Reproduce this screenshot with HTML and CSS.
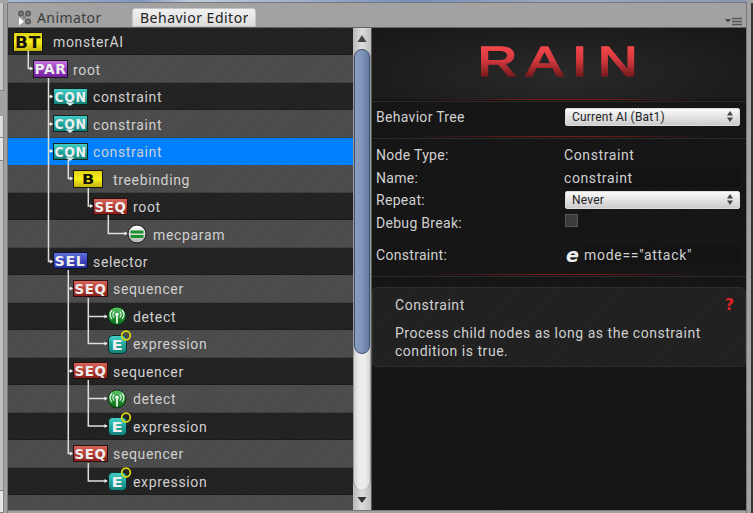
FILE: index.html
```html
<!DOCTYPE html>
<html lang="en">
<head>
<meta charset="utf-8">
<title>Behavior Editor</title>
<link rel="stylesheet" href="styles.css">
</head>
<body>
<svg class="defs" width="0" height="0" aria-hidden="true">
  <defs>
    <linearGradient id="gYellow" x2="0" y2="1"><stop offset="0" stop-color="#ddd018"/><stop offset=".5" stop-color="#f8ee18"/><stop offset="1" stop-color="#c0b30c"/></linearGradient>
    <linearGradient id="gPurple" x2="0" y2="1"><stop offset="0" stop-color="#c778dd"/><stop offset=".45" stop-color="#9e45c4"/><stop offset="1" stop-color="#6f1c9c"/></linearGradient>
    <linearGradient id="gTeal" x2="0" y2="1"><stop offset="0" stop-color="#45cfc5"/><stop offset=".5" stop-color="#20a79e"/><stop offset="1" stop-color="#128078"/></linearGradient>
    <linearGradient id="gRed" x2="0" y2="1"><stop offset="0" stop-color="#d9695d"/><stop offset=".5" stop-color="#b53c32"/><stop offset="1" stop-color="#85201a"/></linearGradient>
    <linearGradient id="gBlue" x2="0" y2="1"><stop offset="0" stop-color="#6573df"/><stop offset=".5" stop-color="#3d48bd"/><stop offset="1" stop-color="#232c99"/></linearGradient>
    <linearGradient id="gGreen" x2="0" y2="1"><stop offset="0" stop-color="#62c76c"/><stop offset=".5" stop-color="#259434"/><stop offset="1" stop-color="#0b6719"/></linearGradient>
    <linearGradient id="gWhite" x2="0" y2="1"><stop offset="0" stop-color="#fff"/><stop offset="1" stop-color="#b5b5b5"/></linearGradient>
    <linearGradient id="gLogo" x2="0" y2="1"><stop offset=".18" stop-color="#f5484c"/><stop offset=".5" stop-color="#cf373b"/><stop offset=".82" stop-color="#75191c"/></linearGradient>
    <symbol id="bt" viewBox="0 0 30 20"><rect x=".5" y=".5" width="29" height="19" fill="url(#gYellow)" stroke="#17160a"/><text class="code dark" x="2" y="15.5" font-size="15" textLength="26" lengthAdjust="spacingAndGlyphs">BT</text></symbol>
    <symbol id="par" viewBox="0 0 35 18"><rect x=".5" y=".5" width="34" height="17" fill="url(#gPurple)" stroke="#201026"/><text class="code" x="1.5" y="14" font-size="14" textLength="32" lengthAdjust="spacingAndGlyphs">PAR</text></symbol>
    <symbol id="con" viewBox="0 0 35 18"><rect x=".5" y=".5" width="34" height="16" fill="url(#gTeal)" stroke="#102522"/><path d="M12.5 14.5h9L17 18z" fill="#d8eeec"/><text class="code" x="1.5" y="13.5" font-size="14" textLength="32" lengthAdjust="spacingAndGlyphs">CON</text></symbol>
    <symbol id="b" viewBox="0 0 30 18"><rect x=".5" y=".5" width="29" height="17" fill="url(#gYellow)" stroke="#17160a"/><text class="code dark" x="9" y="14" font-size="14" textLength="13" lengthAdjust="spacingAndGlyphs">B</text></symbol>
    <symbol id="seq" viewBox="0 0 35 18"><rect x=".5" y=".5" width="34" height="16" fill="url(#gRed)" stroke="#2a0f0c"/><text class="code" x="1.5" y="13.5" font-size="14" textLength="32" lengthAdjust="spacingAndGlyphs">SEQ</text></symbol>
    <symbol id="sel" viewBox="0 0 35 18"><rect x=".5" y=".5" width="34" height="16" fill="url(#gBlue)" stroke="#101230"/><text class="code" x="1.5" y="13.5" font-size="14" textLength="31" lengthAdjust="spacingAndGlyphs">SEL</text></symbol>
    <symbol id="mec" viewBox="0 0 20 20"><circle cx="10" cy="10" r="9" fill="url(#gWhite)" stroke="#1a1a1a"/><path d="M3.5 6.5h13v3h-13zM3.5 11h13v3h-13z" fill="#199230"/></symbol>
    <symbol id="det" viewBox="0 0 20 20"><circle cx="10" cy="10" r="9" fill="url(#gGreen)" stroke="#0c3312"/><circle cx="10" cy="8.5" r="1.8" fill="#fff"/><path d="M10 9v8.5" stroke="#d8f0da" stroke-width="2"/><path d="M7.3 5.5a4 4 0 0 0 0 6M12.7 5.5a4 4 0 0 1 0 6M5 4a6.4 6.4 0 0 0 0 9M15 4a6.4 6.4 0 0 1 0 9" fill="none" stroke="#e5f6e6" stroke-width="1.1"/></symbol>
    <symbol id="exp" viewBox="0 0 26 26"><rect x="1.500" y="6.500" width="18" height="18" rx="4" fill="url(#gTeal)" stroke="#0d2b29"/><text class="code" x="4.500" y="20.500" font-size="14" textLength="12" lengthAdjust="spacingAndGlyphs">E</text><circle cx="19" cy="6.500" r="4.300" fill="none" stroke="#dcd713" stroke-width="1.700"/></symbol>
  </defs>
</svg>

<div class="editor">
  <div class="scene"></div>
  <div class="dock"><i class="slab tall"></i><i class="slab small"></i><i class="slab tiny"></i><i class="slab rest"></i><i class="slab last"></i></div>
  <div class="window">
    <div class="tabs">
      <div class="tab">
        <svg class="tab-icon" width="16" height="16" viewBox="0 0 16 16"><g fill="#777" stroke="#555" stroke-width="1.200"><circle cx="4" cy="3.500" r="2.400"/><circle cx="11" cy="3.500" r="2.400"/><circle cx="11" cy="11.500" r="2.400"/></g><path d="M5 5l5 5M9.500 5L6 9" stroke="#666"/><path d="M2 7.500l5 4-5 4z" fill="#fff"/></svg>
        <span class="animator">Animator</span>
      </div>
      <div class="tab active"><span>Behavior Editor</span></div>
      <svg class="menu" width="18" height="9" viewBox="0 0 18 9"><path d="M0 2h6L3 5.500z" fill="#444"/><path d="M7 1.500h10M7 4.500h10M7 7.500h10" stroke="#555" stroke-width="1.300"/></svg>
    </div>
    <div class="body">
      <div class="tree">
        <div class="row d0"><svg class="i-bt"><use href="#bt"/></svg><span>monsterAI</span></div>
        <div class="row d1"><svg class="i-code"><use href="#par"/></svg><span>root</span></div>
        <div class="row d2"><svg class="i-code"><use href="#con"/></svg><span>constraint</span></div>
        <div class="row d2"><svg class="i-code"><use href="#con"/></svg><span>constraint</span></div>
        <div class="row d2 selected"><svg class="i-code"><use href="#con"/></svg><span>constraint</span></div>
        <div class="row d3"><svg class="i-b"><use href="#b"/></svg><span>treebinding</span></div>
        <div class="row d4"><svg class="i-code"><use href="#seq"/></svg><span>root</span></div>
        <div class="row d5"><svg class="i-round mec"><use href="#mec"/></svg><span>mecparam</span></div>
        <div class="row d2"><svg class="i-code"><use href="#sel"/></svg><span>selector</span></div>
        <div class="row d3"><svg class="i-code"><use href="#seq"/></svg><span>sequencer</span></div>
        <div class="row d4"><svg class="i-round"><use href="#det"/></svg><span>detect</span></div>
        <div class="row d4"><svg class="i-exp"><use href="#exp"/></svg><span>expression</span></div>
        <div class="row d3"><svg class="i-code"><use href="#seq"/></svg><span>sequencer</span></div>
        <div class="row d4"><svg class="i-round"><use href="#det"/></svg><span>detect</span></div>
        <div class="row d4"><svg class="i-exp"><use href="#exp"/></svg><span>expression</span></div>
        <div class="row d3"><svg class="i-code"><use href="#seq"/></svg><span>sequencer</span></div>
        <div class="row d4"><svg class="i-exp"><use href="#exp"/></svg><span>expression</span></div>
        <div class="row"></div>
        <svg class="links" width="345" height="483" viewBox="8 28 345 483">
          <g fill="none" stroke="#deded9" stroke-width="1.500">
            <path d="M28.300 51v17.500h4M48.500 78v183.500h4M48.500 96.500h4M48.500 124h4M48.500 151h4M68.300 160v18.500h4M88.300 188v18h4M108.300 215v18.500H127M68.300 270v183.500h4M68.300 288.500h4M68.300 371h4M88.300 298v45.500H107M88.300 316.500H107M88.300 380v46H107M88.300 398.500H107M88.300 463v18H107"/>
          </g>
          <path fill="#eee" d="M30 66.500l3 2-3 2zM50 94.500l3 2-3 2zM50 122l3 2-3 2zM50 149l3 2-3 2zM50 259.500l3 2-3 2zM70 176.500l3 2-3 2zM90 204l3 2-3 2zM124.500 231.500l3 2-3 2zM70 286.500l3 2-3 2zM70 369l3 2-3 2zM70 451.500l3 2-3 2zM104.500 314.500l3 2-3 2zM104.500 341.500l3 2-3 2zM104.500 396.500l3 2-3 2zM104.500 424l3 2-3 2zM104.500 479l3 2-3 2z"/>
        </svg>
      </div>
      <div class="scrollbar">
        <svg width="18" height="21" viewBox="0 0 18 21"><path d="M4.500 14h9L9 7z" fill="#444"/></svg>
        <div class="track"><div class="thumb"></div></div>
        <svg width="18" height="20" viewBox="0 0 18 20"><path d="M4.500 7h9L9 13z" fill="#333"/></svg>
      </div>
      <div class="inspector">
        <div class="banner">
          <svg width="374" height="72" viewBox="372 28 374 72"><g transform="translate(477.500 76.300) scale(1.300 1)"><text class="logo" x="0 37.300 72.700 92.500" y="0" font-size="42.500">RAIN</text></g></svg>
        </div>
        <div class="rule"></div>
        <div class="fields first">
          <label>Behavior Tree</label>
          <div class="select"><span>Current AI (Bat1)</span><svg width="6" height="11" viewBox="0 0 6 11"><path d="M0 4.500h6L3 0zM0 6.500h6L3 11z" fill="#444"/></svg></div>
        </div>
        <div class="rule"></div>
        <div class="fields">
          <label>Node Type:</label><span class="value">Constraint</span>
          <label>Name:</label><span class="value input">constraint</span>
          <label>Repeat:</label><div class="select"><span>Never</span><svg width="6" height="11" viewBox="0 0 6 11"><path d="M0 4.500h6L3 0zM0 6.500h6L3 11z" fill="#444"/></svg></div>
          <label>Debug Break:</label><i class="check"></i>
        </div>
        <div class="fields expr">
          <label>Constraint:</label><div class="value"><b>e</b><span class="input mode">mode=="attack"</span></div>
        </div>
        <div class="rule"></div>
        <div class="help">
          <div class="help-head"><span>Constraint</span><b>?</b></div>
          <p>Process child nodes as long as the constraint<br>condition is true.</p>
        </div>
      </div>
    </div>
  </div>
  <div class="edge"></div>
</div>
</body>
</html>
```
FILE: styles.css
```css
* { box-sizing: border-box; }
body { margin: 0; width: 753px; height: 513px; overflow: hidden; background: #a2a2a2; color: #d0d0d0; font: 14px/18px Roboto, sans-serif; }
.defs { position: absolute; }
.editor { display: grid; grid-template: 3px 510px / 8px 738px 7px; }
.scene { grid-column: 1 / 4; margin-left: 8px; margin-right: 6px; background: linear-gradient(90deg, #a8bad8, #8297c2 18%, #c1cbdc 25%, #7990bd 55%, #9ba9c2 75%, #8a99b3); border-bottom: 1px solid #777; }
.dock { display: flex; flex-direction: column; background: #a2a2a2; border-right: 1px solid #777; }
.slab { width: 4px; background: #c8c8c8; border-right: 1px solid #858585; border-bottom: 1px solid #858585; }
.tall { height: 88px; }
.small { height: 22px; margin-top: 25px; background: #ddd; }
.tiny { height: 23px; background: #e4e4e4; }
.rest { height: 330px; background: #c1c1c1; }
.last { height: 22px; background: #e6e6e6; }

.tabs { display: flex; align-items: flex-end; height: 25px; border-bottom: 1px solid #646464; }
.tab { display: flex; align-items: center; height: 19px; width: 124px; padding-left: 9px; color: #3c3c3c; font: 14px/18px "Noto Sans", sans-serif; }
.tab-icon { margin-right: 4px; }
.animator { letter-spacing: .4px; }
.tab.active { width: 124px; padding-left: 7px; background: linear-gradient(#f2f2f2, #dcdcdc); border: 1px solid #c4c4c4; border-radius: 3px 3px 0 0; color: #222; white-space: nowrap; overflow: hidden; }
.tab.active span { width: 108px; overflow: hidden; letter-spacing: .5px; }
.menu { margin: 0 3px 1px auto; }

.body { display: flex; height: 483px; border-bottom: 1px solid #777; }
.tree { position: relative; width: 345px; overflow: hidden; }
.row { display: flex; align-items: center; height: 27.470px; padding-top: 1px; background: repeating-linear-gradient(135deg, #202020 0 1.500px, #252525 1.500px 3.500px); letter-spacing: .65px; white-space: nowrap; border-bottom: 1px solid #1b1b1b; }
.row:nth-child(even) { background: repeating-linear-gradient(135deg, #494949 0 1.500px, #4e4e4e 1.500px 3.500px); border-color: #3f3f3f; }
.row.selected { background: #0080ff; border-color: #0080ff; }
.row span { padding-top: 1px; }
.d0 { padding-left: 5px; } .d1 { padding-left: 25px; } .d2 { padding-left: 45px; }
.d3 { padding-left: 65px; } .d4 { padding-left: 85px; } .d5 { padding-left: 105px; }
.row svg { flex: none; overflow: visible; }
.i-bt { width: 30px; height: 20px; margin-right: 10px; }
.i-code { width: 35px; height: 18px; margin-right: 5px; }
.i-b { width: 30px; height: 18px; margin-right: 10px; }
.i-round { width: 20px; height: 20px; margin: 0 6px 0 14px; }
.i-exp { width: 26px; height: 26px; margin: -4px 0 0 14px; }
.links { position: absolute; left: 0; top: 0; }
.code { font-family: "DejaVu Sans", sans-serif; font-weight: bold; fill: #eee; }
.code.dark { fill: #15140a; }

.scrollbar { display: flex; flex-direction: column; width: 19px; border-right: 1px solid #555; background: linear-gradient(90deg, #b9b9b9, #dedede 50%, #bdbdbd); }
.track { height: 441px; border: 1px solid #999; border-width: 0 1px; border-radius: 9px; background: linear-gradient(90deg, #d0d0d0, #ececec 30%, #ececec 70%, #d4d4d4); }
.thumb { height: 305px; border: 1px solid #3e5276; border-radius: 8px; background: linear-gradient(90deg, #899dbe, #8297b9 45%, #657ba2); }

.inspector { width: 374px; background: repeating-linear-gradient(135deg, #131313 0 1.500px, #181818 1.500px 3.500px); overflow: hidden; }
.banner { height: 71px; background: radial-gradient(ellipse at 50% 65%, #292929, #1d1d1d 65%, #171717); }
.banner svg { display: block; }
.logo { font-family: "Liberation Sans", sans-serif; fill: url(#gLogo); stroke: url(#gLogo); stroke-width: 1.600px; }
.rule { height: 3px; background: linear-gradient(90deg, transparent 10%, #77181a 45%, #77181a 60%, transparent 90%) 0 0 / 100% 1px no-repeat, linear-gradient(#2a2a2a, #2a2a2a) 0 2px / 100% 1px no-repeat; }
.fields { display: grid; grid-template-columns: 188px 175px; grid-auto-rows: 22.500px; align-items: center; padding: 6px 0 0 5px; letter-spacing: .3px; }
.fields label { margin: -1px 0 1px -1px; }
.fields.first { height: 34px; padding-top: 5px; }
.value { margin: -2px 0 0 -1px; letter-spacing: .6px; }
.input { background: #131313; }
.select { display: flex; align-items: center; justify-content: space-between; height: 18px; margin-top: -3px; padding: 0 6px 0 6px; border-radius: 2px; background: linear-gradient(#fafafa, #ccc); border: 1px solid #ddd; color: #222; font-size: 12px; letter-spacing: .2px; }
.check { width: 13px; height: 13px; margin-top: -6px; background: #3b3b3b; border: 1px solid #555; }
.expr { padding-top: 10px; height: 39px; }
.expr .value { display: flex; align-items: center; }
.expr b { width: 17px; padding-left: 2px; font: italic 600 19px/18px "DejaVu Sans", sans-serif; color: #eee; }
.mode { flex: 1; margin-left: 3px; letter-spacing: .7px; }
.help { height: 80px; margin-top: 10px; padding: 8px 11px 0 22px; border: 1px solid #2d2d2d; border-radius: 5px; background: repeating-linear-gradient(135deg, #1f1f1f 0 1.500px, #232323 1.500px 3.500px); letter-spacing: .53px; white-space: nowrap; }
.help-head { display: flex; justify-content: space-between; height: 18px; }
.help-head b { color: #df2328; font: bold 16px/18px "DejaVu Sans", sans-serif; letter-spacing: 0; }
.help p { margin: 10px 0 0; }
.edge { border-left: 1px solid #777; border-right: 2px solid #333; }
```
